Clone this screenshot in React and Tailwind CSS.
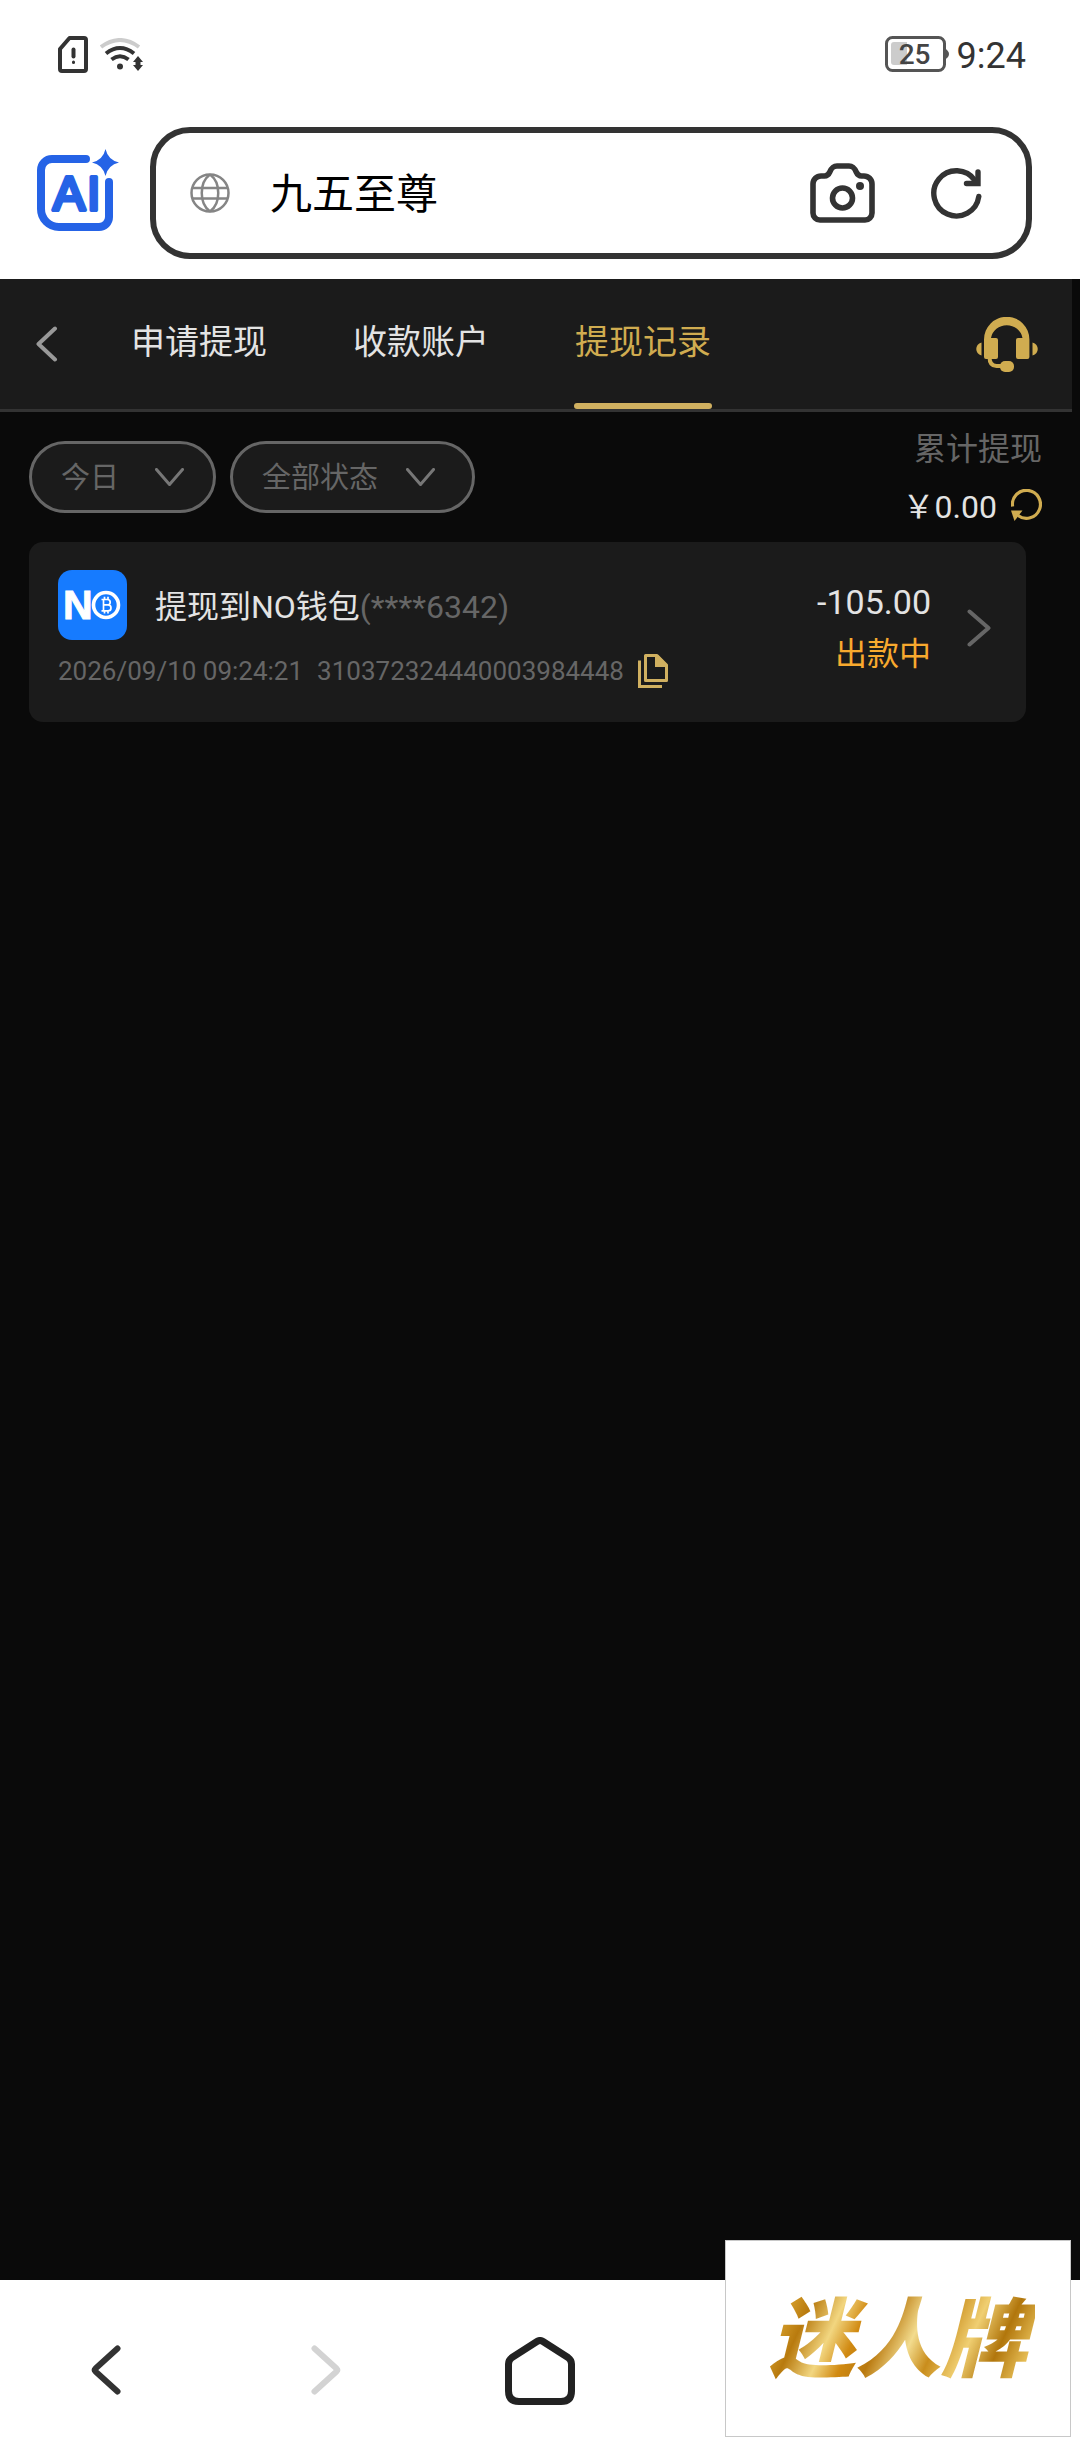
import React, { useState } from 'react';

const TABS = [
  { id: 'apply', label: '申请提现' },
  { id: 'accounts', label: '收款账户' },
  { id: 'records', label: '提现记录' },
];

const RECORDS = [
  {
    id: '310372324440003984448',
    title: '提现到NO钱包',
    account: '(****6342)',
    time: '2026/09/10 09:24:21',
    amount: '-105.00',
    status: '出款中',
  },
];

const SimIcon = () => (
  <svg width="30" height="37" viewBox="0 0 30 37" fill="none" stroke="#333" aria-hidden="true">
    <path d="M11.5 2H26a2 2 0 0 1 2 2v29a2 2 0 0 1-2 2H4a2 2 0 0 1-2-2V13z" strokeWidth="4" strokeLinejoin="round" />
    <path d="M15.5 13.5v7" strokeWidth="4" strokeLinecap="round" />
    <path d="M15.5 26v.5" strokeWidth="3" strokeLinecap="round" />
  </svg>
);

const WifiIcon = () => (
  <svg width="43" height="33" viewBox="0 0 43 33" fill="none" strokeWidth="4" aria-hidden="true">
    <path d="M1 9Q20 -5 39 9" stroke="#ccc" />
    <path d="M6 15.5Q20 4.5 34 15.5" stroke="#333" />
    <path d="M11.5 21.5Q20 15 28.5 21.5" stroke="#333" />
    <circle cx="20" cy="28.5" r="3" fill="#333" />
    <path d="M38 18l5 6h-2.5v3h2.5l-5 6-5-6h2.5v-3h-2.5z" fill="#333" />
  </svg>
);

const Battery = ({ level }) => (
  <div className="relative h-9 w-16">
    <svg width="64" height="36" viewBox="0 0 64 36" fill="none" aria-hidden="true">
      <rect x="1.5" y="1.5" width="58" height="33" rx="6" stroke="#555" strokeWidth="3" />
      <path d="M60 12.5q4 2.5 4 5.500t-4 5.500z" fill="#555" />
      <path d="M9 6h13v23H9a3 3 0 0 1-3-3V9a3 3 0 0 1 3-3z" fill="#ccc" />
    </svg>
    <span className="absolute inset-y-0 left-0 w-[60px] text-center text-[28px] font-medium leading-[38px] text-[#444]">
      {level}
    </span>
  </div>
);

const AiLogo = () => (
  <svg width="84" height="88" viewBox="0 0 84 88" fill="none" aria-hidden="true">
    <path
      d="M49 10H15A11 11 0 0 0 4 21v39a18 18 0 0 0 18 18h40a10 10 0 0 0 10-10V33"
      stroke="#2563e6"
      strokeWidth="8"
      strokeLinecap="round"
    />
    <path d="M68.500 0Q71 11 82 13.500Q71 16 68.500 27Q66 16 55 13.500Q66 11 68.500 0z" fill="#2563e6" />
    <g
      fill="#2563e6"
      stroke="#2563e6"
      strokeWidth="4"
      strokeLinejoin="round"
      fontFamily="Liberation Sans, sans-serif"
      fontSize="48"
      fontWeight="400"
    >
      <text x="16" y="61">A</text>
      <text x="50" y="61">I</text>
    </g>
  </svg>
);

const GlobeIcon = () => (
  <svg width="40" height="40" viewBox="0 0 40 40" fill="none" stroke="#858585" strokeWidth="2.5" aria-hidden="true">
    <circle cx="20" cy="20" r="18.5" />
    <path d="M20 1.500c-11 8-11 29 0 37M20 1.500c11 8 11 29 0 37M3 15h34M3 25.500h34" />
  </svg>
);

const CameraIcon = () => (
  <svg width="65" height="60" viewBox="0 0 65 60" fill="none" stroke="#333" strokeWidth="5.600" aria-hidden="true">
    <path
      d="M11 13h3.500c3 0 4.200-1.500 5.200-3.800C21.500 5 23 3 27 3h12c4 0 5.500 2 7.300 6.200 1 2.300 2.200 3.800 5.200 3.800H54a8 8 0 0 1 8 8v29a7 7 0 0 1-7 7H10a7 7 0 0 1-7-7V21a8 8 0 0 1 8-8z"
      strokeLinejoin="round"
    />
    <circle cx="32.500" cy="35" r="10" />
    <circle cx="50" cy="23" r="4" fill="#333" stroke="none" />
  </svg>
);

const ReloadIcon = () => (
  <svg width="51" height="51" viewBox="0 0 51 51" fill="none" stroke="#333" strokeWidth="5.400" strokeLinecap="round" aria-hidden="true">
    <path d="M47.800 28.500A22.600 22.600 0 1 1 44 12.500" />
    <path d="M47 4v11.500H35.500" />
  </svg>
);

const HeadsetIcon = () => (
  <svg width="62" height="55" viewBox="0 0 62 55" fill="#d0ac50" aria-hidden="true">
    <path d="M8 40V22.500a22.700 22.700 0 0 1 45.400 0V40a2 2 0 0 1-2 2H42a2 2 0 0 1-2-2V23a2 2 0 0 1 2-2h4.500a16 15.500 0 0 0-31.500 0h5a2 2 0 0 1 2 2v17a2 2 0 0 1-2 2h-10a2 2 0 0 1-2-2z" />
    <path d="M5.500 25.500v13C-1.500 37-1.500 27 5.500 25.500zM56.500 25.500v13c7-1.500 7-11.500 0-13z" />
    <path d="M13.500 40c0 6 2.500 9 7 9H27" fill="none" stroke="#d0ac50" strokeWidth="4" />
    <rect x="24" y="44" width="14" height="11" rx="5" />
  </svg>
);

const RefreshIcon = () => (
  <svg width="31" height="32" viewBox="0 0 31 32" aria-hidden="true">
    <path d="M1.600 17.500A14 14 0 1 1 7 26.500" fill="none" stroke="#d0ac50" strokeWidth="3.200" />
    <path d="M0 21.500h11.500L3.500 32z" fill="#d0ac50" />
  </svg>
);

const CopyIcon = () => (
  <svg width="30" height="34" viewBox="0 0 30 34" aria-hidden="true">
    <path d="M1.500 6.500v26H24" fill="none" stroke="#d0b060" strokeWidth="3" />
    <path d="M7.500 1.500H19L28.500 11v15.500h-21z" fill="none" stroke="#d0b060" strokeWidth="3" strokeLinejoin="round" />
    <path d="M17 1h3l9 9.500V13H17z" fill="#d0b060" />
  </svg>
);

const WalletLogo = () => (
  <svg className="shrink-0" width="69" height="70" viewBox="0 0 69 70" role="img" aria-label="NO">
    <rect width="69" height="70" rx="14" fill="#167bff" />
    <text x="5" y="49" fontFamily="Liberation Sans, sans-serif" fontWeight="700" fontSize="41" fill="#fff" stroke="#fff" strokeWidth="1">
      N
    </text>
    <circle cx="48" cy="35" r="12.500" fill="#167bff" stroke="#fff" strokeWidth="3.600" />
    <path
      d="M43.500 29.500h6a2.700 2.700 0 0 1 0 5.400h-4 4.500a3 3 0 0 1 0 6h-6.500M45.500 29.500v11.400M46.500 26.800v2.500M50 26.800v2.500M46.500 41v2.500M50 41v2.500"
      fill="none"
      stroke="#fff"
      strokeWidth="1.700"
    />
  </svg>
);

const FilterSelect = ({ label, className, chevronClassName, options }) => (
  <div className={`relative ${className}`}>
    <select
      aria-label={label}
      className="h-[72px] w-full appearance-none rounded-full border-[3px] border-[#666] bg-[#1b1b1b] pl-[29px] pr-14 pt-0.5 text-[29px] leading-[36px] text-[#666] outline-none"
    >
      {options.map((option) => (
        <option key={option}>{option}</option>
      ))}
    </select>
    <svg
      className={`pointer-events-none absolute top-[27px] ${chevronClassName}`}
      width="29"
      height="18"
      viewBox="0 0 29 18"
      fill="none"
      stroke="#777"
      strokeWidth="3"
      strokeLinecap="round"
      strokeLinejoin="round"
      aria-hidden="true"
    >
      <path d="M1.500 1.500l13 15 13-15" />
    </svg>
  </div>
);

const RecordCard = ({ record }) => (
  <article className="flex justify-between rounded-[14px] bg-[#1b1b1b] pb-[34px] pl-[29px] pr-[35px] pt-7">
    <div>
      <div className="flex items-center gap-7">
        <WalletLogo />
        <h2 className="pt-1 text-[32px] leading-[40px] text-[#e3e3e3]">
          {record.title}
          <span className="text-[#666]">{record.account}</span>
        </h2>
      </div>
      <div className="mt-3.5 flex h-[34px] items-center gap-3.5 text-[26px] leading-[34px] text-[#666]">
        <time>{record.time}</time>
        <span>{record.id}</span>
        <button type="button" aria-label="复制">
          <CopyIcon />
        </button>
      </div>
    </div>
    <div className="flex items-center gap-9 self-start pt-3">
      <div className="flex flex-col gap-3 text-right">
        <p className="text-[34px] leading-[40px] text-[#e3e3e3]">{record.amount}</p>
        <p className="text-[32px] leading-[40px] text-[#f8a92e]">{record.status}</p>
      </div>
      <button type="button" aria-label="查看详情">
        <svg width="24" height="38" viewBox="0 0 24 38" fill="none" stroke="#666" strokeWidth="4" strokeLinecap="round" strokeLinejoin="round" aria-hidden="true">
          <path d="M2.500 2.500L21.500 19 2.500 35.500" />
        </svg>
      </button>
    </div>
  </article>
);

const BrowserHeader = () => (
  <header className="bg-white pb-5">
    <div className="flex h-[108px] items-center justify-between pl-[58px] pr-[54px]">
      <div className="flex items-center gap-3">
        <SimIcon />
        <WifiIcon />
      </div>
      <div className="flex items-center gap-2">
        <Battery level="25" />
        <time className="pt-1 text-[36px] leading-[40px] text-[#333]">9:24</time>
      </div>
    </div>
    <div className="flex items-center gap-[29px] pl-[37px] pr-12 pt-[19px]">
      <button type="button" aria-label="AI" className="shrink-0">
        <AiLogo />
      </button>
      <form
        className="flex h-[132px] min-w-0 flex-1 items-center rounded-[40px] border-[6px] border-[#333] pl-[34px] pr-[44px]"
        onSubmit={(e) => e.preventDefault()}
      >
        <GlobeIcon />
        <input
          type="text"
          aria-label="搜索或输入网址"
          defaultValue="九五至尊"
          className="ml-10 min-w-0 flex-1 bg-transparent pt-1 text-[42px] leading-[56px] text-black outline-none"
        />
        <button type="button" aria-label="拍照搜索">
          <CameraIcon />
        </button>
        <button type="button" aria-label="刷新" className="ml-14">
          <ReloadIcon />
        </button>
      </form>
    </div>
  </header>
);

const BottomBar = () => (
  <nav className="grid h-[180px] grid-cols-5 place-items-center bg-white">
    <button type="button" aria-label="后退">
      <svg width="34" height="50" viewBox="0 0 34 50" fill="none" stroke="#333" strokeWidth="6" strokeLinecap="round" strokeLinejoin="round" aria-hidden="true">
        <path d="M26.500 3.500L4.500 23.500q-1.500 1.500 0 3L26.500 46.500" />
      </svg>
    </button>
    <button type="button" aria-label="前进">
      <svg width="34" height="50" viewBox="0 0 34 50" fill="none" stroke="#d3d3d3" strokeWidth="6" strokeLinecap="round" strokeLinejoin="round" aria-hidden="true">
        <path d="M7.500 3.500L29.500 23.500q1.500 1.500 0 3L7.500 46.500" />
      </svg>
    </button>
    <button type="button" aria-label="主页" className="pt-0.5">
      <svg width="70" height="68" viewBox="0 0 70 68" fill="none" stroke="#222" strokeWidth="7" strokeLinejoin="round" aria-hidden="true">
        <path d="M32 4.500q3-2 6 0L63 20.500q3.500 2.500 3.500 6.500V54q0 10.500-10.500 10.500H14Q3.500 64.500 3.500 54V27q0-4 3.500-6.500z" />
      </svg>
    </button>
  </nav>
);

export default function App() {
  const [activeTab, setActiveTab] = useState('records');

  return (
    <div className="flex min-h-screen flex-col bg-[#0a0a0a] font-[Roboto,'Noto_Sans_CJK_SC',sans-serif]">
      <BrowserHeader />

      <main className="flex-1 pr-2">
        <div className="flex h-[133px] items-stretch border-b-[3px] border-[#333] bg-[#1b1b1b] pl-9 pr-[34px]">
          <button type="button" aria-label="返回">
            <svg width="22" height="36" viewBox="0 0 22 36" fill="none" stroke="#999" strokeWidth="4" strokeLinecap="round" strokeLinejoin="round" aria-hidden="true">
              <path d="M19 2.500L2.500 18 19 33.500" />
            </svg>
          </button>
          <div role="tablist" className="ml-[72px] flex flex-1 gap-[84px]">
            {TABS.map((tab) => (
              <button
                key={tab.id}
                type="button"
                role="tab"
                aria-selected={tab.id === activeTab}
                onClick={() => setActiveTab(tab.id)}
                className={`flex w-[138px] flex-col items-center justify-between whitespace-nowrap pt-[41px] text-[34px] leading-[44px] ${
                  tab.id === activeTab ? 'text-[#d0ac50]' : 'text-[#e3e3e3]'
                }`}
              >
                {tab.label}
                <span className={`h-1.5 w-full rounded-full ${tab.id === activeTab ? 'bg-[#d0b060]' : 'bg-transparent'}`} />
              </button>
            ))}
          </div>
          <button type="button" aria-label="客服">
            <HeadsetIcon />
          </button>
        </div>

        <div className="flex items-start justify-between pl-[29px] pr-[30px] pt-[19px]">
          <div className="mt-2.5 flex gap-3.5">
            <FilterSelect label="日期" className="w-[187px]" chevronClassName="right-8" options={['今日', '昨日', '近7日']} />
            <FilterSelect label="状态" className="w-[245px]" chevronClassName="right-10" options={['全部状态', '出款中']} />
          </div>
          <div className="flex flex-col items-end gap-[22px]">
            <p className="text-[32px] leading-[36px] text-[#666]">累计提现</p>
            <div className="flex h-8 items-center gap-3.5 text-[32px] leading-[32px] text-[#e3e3e3]">
              <span className="pt-1">￥0.00</span>
              <button type="button" aria-label="刷新累计提现">
                <RefreshIcon />
              </button>
            </div>
          </div>
        </div>

        <section className="ml-[29px] mr-[46px] mt-[21px]">
          {RECORDS.map((record) => (
            <RecordCard key={record.id} record={record} />
          ))}
        </section>
      </main>

      <BottomBar />

      <div className="fixed bottom-[23px] right-[9px] flex h-[197px] w-[346px] items-center justify-center border border-[#c8c8c8] bg-white pt-1">
        <span className="bg-[linear-gradient(115deg,#a86f0a_0%,#d9a32f_10%,#b87a0e_18%,#f2d680_28%,#d18a12_36%,#b9790f_44%,#f3dc8e_54%,#c98d1c_62%,#f0cf72_72%,#b1760c_82%,#e6bd55_92%,#9a6408_100%)] bg-clip-text px-2 text-[86px] font-black italic leading-[110px] text-transparent">
          迷人牌
        </span>
      </div>
    </div>
  );
}
